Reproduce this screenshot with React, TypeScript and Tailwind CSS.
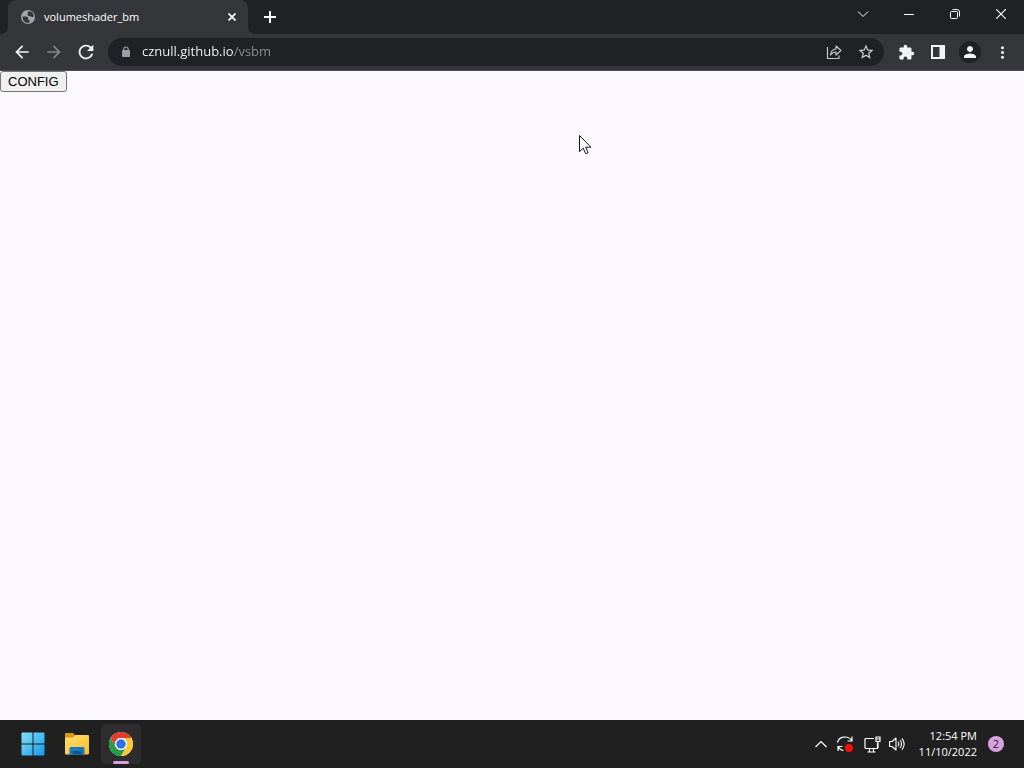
import React, { useState } from 'react';
import {
  MdArrowBack,
  MdArrowForward,
  MdExtension,
  MdMoreVert,
  MdPerson,
  MdRefresh,
  MdStarBorder,
} from 'react-icons/md';

interface IconButtonProps {
  label: string;
  className?: string;
  children: React.ReactNode;
}

const IconButton: React.FC<IconButtonProps> = ({ label, className = 'w-8 h-7', children }) => (
  <button type="button" aria-label={label} className={`flex items-center justify-center shrink-0 ${className}`}>
    {children}
  </button>
);

const TitleBar: React.FC = () => (
  <header className="flex h-[34px] pl-2 bg-[#202124] text-white">
    <div className="relative flex items-center w-60 pl-3 pr-2 rounded-t-lg bg-[#35363a]">
      {/* Default favicon */}
      <svg width="16" height="16" viewBox="0 0 16 16" className="shrink-0">
        <circle cx="8" cy="8" r="7" fill="#a3a6aa" />
        <path
          d="M2.500 7.500h3.500c1.500 0 2 .8 2 2s.8 1.500 1.500 1.500v2.500c-4 1.200-7-1.500-7-6zM7.500 2.500h3.500c2 1.200 3 3 2.700 5.500h-1.700c-1 0-1.500-1-2.500-1s-2-.5-2-1.500.5-1 .5-1.500-.5-.5-.5-1.500z"
          fill="#35363a"
        />
      </svg>
      <span className="ml-2 flex-1 text-[11px]">volumeshader_bm</span>
      <IconButton label="Close tab" className="w-4 h-4">
        <svg width="8" height="8" viewBox="0 0 8 8" stroke="currentColor" strokeWidth="1.7">
          <path d="M0.5 0.5l7 7M7.5 0.5l-7 7" />
        </svg>
      </IconButton>
      {/* Flared tab feet */}
      <span className="absolute bottom-0 -left-2 w-2 h-2 bg-[radial-gradient(circle_at_0_0,#202124_8px,#35363a_8px)]" />
      <span className="absolute bottom-0 -right-2 w-2 h-2 bg-[radial-gradient(circle_at_100%_0,#202124_8px,#35363a_8px)]" />
    </div>
    <IconButton label="New tab" className="w-11 h-[34px]">
      <svg width="12" height="12" viewBox="0 0 12 12" stroke="currentColor" strokeWidth="2">
        <path d="M6 0v12M0 6h12" />
      </svg>
    </IconButton>

    <div className="flex ml-auto">
      <IconButton label="Search tabs" className="w-[46px] h-7">
        <svg width="12" height="8" viewBox="0 0 12 8" fill="none" stroke="currentColor">
          <path d="M1 1.5l5 5 5-5" />
        </svg>
      </IconButton>
      <IconButton label="Minimize" className="w-[46px] h-7">
        <svg width="10" height="10" viewBox="0 0 10 10" stroke="currentColor">
          <path d="M0 5.5h10" />
        </svg>
      </IconButton>
      <IconButton label="Restore" className="w-[46px] h-7">
        <svg width="10" height="10" viewBox="0 0 10 10" fill="none" stroke="currentColor">
          <rect x="0.5" y="2.5" width="7" height="7" rx="1" />
          <path d="M2.5 .5h4.5a2.5 2.5 0 0 1 2.5 2.5v4.5" />
        </svg>
      </IconButton>
      <IconButton label="Close" className="w-[46px] h-7">
        <svg width="10" height="10" viewBox="0 0 10 10" stroke="currentColor" strokeWidth="1.1">
          <path d="M0 0l10 10M10 0L0 10" />
        </svg>
      </IconButton>
    </div>
  </header>
);

const Toolbar: React.FC = () => {
  const [url, setUrl] = useState('cznull.github.io/vsbm');

  return (
    <nav className="flex items-center h-[37px] px-[6px] bg-[#35363a] border-b border-[#4c4d51] text-[#f1f3f4]">
      <IconButton label="Back"><MdArrowBack size={20} /></IconButton>
      <IconButton label="Forward" className="w-8 h-7 text-[#85878b]"><MdArrowForward size={20} /></IconButton>
      <IconButton label="Reload"><MdRefresh size={22} /></IconButton>

      <div className="flex flex-1 items-center h-7 ml-[6px] mr-[6px] pl-3 pr-[2px] rounded-full bg-[#202124]">
        <svg width="12" height="12" viewBox="0 0 12 12" className="text-[#9aa0a6] shrink-0">
          <rect x="2" y="4" width="8" height="7" rx="1" fill="currentColor" />
          <path d="M3.800 5V3.200a2.200 2.200 0 0 1 4.400 0V5" fill="none" stroke="currentColor" strokeWidth="1.200" />
        </svg>
        {/* Host is bright, the path after it is dimmed */}
        <input
          aria-label="Address"
          value={url}
          onChange={(e) => setUrl(e.target.value)}
          className="flex-1 min-w-0 ml-[10px] text-[13px] text-transparent bg-clip-text caret-white outline-none bg-[linear-gradient(90deg,#ffffff_92px,#8e9297_92px)]"
        />
        <IconButton label="Share" className="w-8 h-7 text-[#c4c7ca]">
          <svg width="16" height="16" viewBox="0 0 16 16" fill="none" stroke="currentColor" strokeWidth="1.2">
            <path d="M1.5 3v11.5h11.500v-3" />
            <path d="M4.500 11c.4-4 2.300-5.800 5.500-6V2l5 4.500-5 4.500V8C7.500 8 6 9 4.500 11z" strokeLinejoin="round" />
          </svg>
        </IconButton>
        <IconButton label="Bookmark" className="w-8 h-7 text-[#d0d3d6]"><MdStarBorder size={18} /></IconButton>
      </div>

      <IconButton label="Extensions"><MdExtension size={17} /></IconButton>
      <IconButton label="Side panel">
        <svg width="14" height="14" viewBox="0 0 14 14" fill="none" stroke="currentColor" strokeWidth="2">
          <rect x="1" y="1" width="12" height="12" />
          <path d="M10.500 1v12" strokeWidth="4" />
        </svg>
      </IconButton>
      <IconButton label="Profile">
        <span className="flex items-center justify-center w-[22px] h-[22px] rounded-full bg-[#202124]">
          <MdPerson size={18} />
        </span>
      </IconButton>
      <IconButton label="Menu"><MdMoreVert size={19} /></IconButton>
    </nav>
  );
};

const MouseCursor: React.FC = () => (
  <svg className="absolute left-[579px] top-16 pointer-events-none" width="13" height="20" viewBox="0 0 13 20">
    <path
      d="M.5.5v16.200l3.700-3.600 2.500 5.600 2.400-1-2.400-5.500h5.200z"
      fill="#fff"
      stroke="#17151c"
      strokeLinejoin="round"
    />
  </svg>
);

const WindowsLogo: React.FC = () => (
  <svg width="24" height="24" viewBox="0 0 24 24">
    <defs>
      <linearGradient id="win" x1="0" y1="0" x2="24" y2="24" gradientUnits="userSpaceOnUse">
        <stop stopColor="#83e3fb" />
        <stop offset="1" stopColor="#1497e8" />
      </linearGradient>
    </defs>
    <path
      fill="url(#win)"
      d="M1.500.5h10v11h-11v-10a1 1 0 0 1 1-1zM12.500.5h10a1 1 0 0 1 1 1v10h-11zM.5 12.500h11v11h-10a1 1 0 0 1-1-1zM12.500 12.500h11v10a1 1 0 0 1-1 1h-10z"
    />
  </svg>
);

const FolderIcon: React.FC = () => (
  <svg width="26" height="24" viewBox="0 0 26 24">
    <defs>
      <linearGradient id="folder" x1="0" y1="0" x2="1" y2="1">
        <stop stopColor="#ffdf74" />
        <stop offset="1" stopColor="#fbbd28" />
      </linearGradient>
    </defs>
    <path d="M1 2a1 1 0 0 1 1-1h7l2.500 2.500V9H1z" fill="#dc9712" />
    <path d="M1 5.500h8l2.500-2.500H24a1 1 0 0 1 1 1V21.500a1 1 0 0 1-1 1H2a1 1 0 0 1-1-1z" fill="url(#folder)" />
    <path d="M5.500 22.500v-6a1.500 1.500 0 0 1 1.500-1.500h12a1.500 1.500 0 0 1 1.500 1.500v6z" fill="#1778bd" />
    <path d="M8.500 22.500v-2.500a1 1 0 0 1 1-1h7a1 1 0 0 1 1 1v2.500z" fill="#0b5797" />
  </svg>
);

const ChromeIcon: React.FC = () => (
  <svg width="24" height="24" viewBox="0 0 48 48">
    <circle cx="24" cy="24" r="24" fill="#fff" />
    <path d="M3.200 12A24 24 0 0 1 44.800 12H24A12 12 0 0 0 13.600 30z" fill="#e33b2e" />
    <path d="M44.800 12A24 24 0 0 1 24 48L34.400 30A12 12 0 0 0 24 12z" fill="#fcc934" />
    <path d="M24 48A24 24 0 0 1 3.200 12L13.600 30A12 12 0 0 0 34.400 30z" fill="#269b48" />
    <circle cx="24" cy="24" r="12" fill="#fff" />
    <circle cx="24" cy="24" r="9.500" fill="#2a73e8" />
  </svg>
);

const Taskbar: React.FC = () => (
  <footer className="flex items-center h-12 pl-[13px] pr-5 bg-[#202020] text-white">
    <div className="flex gap-1">
      <IconButton label="Start" className="w-10 h-10"><WindowsLogo /></IconButton>
      <IconButton label="File Explorer" className="w-10 h-10"><FolderIcon /></IconButton>
      <IconButton label="Google Chrome" className="relative w-10 h-10 rounded bg-[#2d2d2d]">
        <ChromeIcon />
        <span className="absolute bottom-0 left-3 w-4 h-[3px] rounded-full bg-[#d6a0dc]" />
      </IconButton>
    </div>

    <div className="flex items-center ml-auto">
      <IconButton label="Show hidden icons" className="w-6 h-10">
        <svg width="12" height="8" viewBox="0 0 12 8" fill="none" stroke="currentColor" strokeWidth="1.2">
          <path d="M.5 7L6 1.500 11.500 7" />
        </svg>
      </IconButton>
      <IconButton label="Updates available" className="w-6 h-10">
        <svg width="18" height="18" viewBox="0 0 18 18" fill="none" stroke="currentColor" strokeWidth="1.200">
          <path d="M1.500 7.500C3 1 12 .2 15.500 5.500M16 1.500v4.500h-4.500" />
          <path d="M7.500 15.500c-2 0-3.800-1.300-5-3.500M2 16v-4.500h4.500" />
          <circle cx="13" cy="13" r="4" fill="#f5100c" stroke="none" />
        </svg>
      </IconButton>
      <IconButton label="Network" className="w-8 h-10">
        <svg width="17" height="17" viewBox="0 0 17 17" fill="none" stroke="currentColor" strokeWidth="1.200">
          <path d="M10 2.500H2a1 1 0 0 0-1 1v8a1 1 0 0 0 1 1h11.500V7M5.500 12.500V16M9.500 12.500V16M3.500 16h8" />
          <path d="M12 1h4v4.500h-4zM12 3h4M14 5.500V12" />
        </svg>
      </IconButton>
      <IconButton label="Volume" className="w-4 h-10">
        <svg width="16" height="16" viewBox="0 0 16 16" fill="none" stroke="currentColor" strokeWidth="1.100">
          <path d="M.6 5.500h2.500L7 2v12l-3.900-3.500H.6z" strokeLinejoin="round" />
          <path d="M9 5.800q1.600 2.200 0 4.400M11 4q3 4 0 8M13 2.300q4.300 5.700 0 11.400" />
        </svg>
      </IconButton>
      <button type="button" className="ml-[14px] text-right text-[11px] leading-4">
        <span className="block">12:54 PM</span>
        <span className="block">11/10/2022</span>
      </button>
      <button
        type="button"
        aria-label="2 notifications"
        className="flex items-center justify-center w-4 h-4 ml-[11px] rounded-full bg-[#d8a0df] text-[#27202a] text-[11px]"
      >
        2
      </button>
    </div>
  </footer>
);

const App: React.FC = () => (
  <div className="flex flex-col min-h-screen font-['Open_Sans',sans-serif]">
    <TitleBar />
    <Toolbar />
    <main className="relative flex-1 bg-[#fbf8ff]">
      <button
        type="button"
        className="block h-[21px] px-[7px] border border-[#767676] rounded-[3px] bg-[#efefef] font-['Liberation_Sans',sans-serif] text-[13px] leading-[19px] text-black"
      >
        CONFIG
      </button>
      <MouseCursor />
    </main>
    <Taskbar />
  </div>
);

export default App;
